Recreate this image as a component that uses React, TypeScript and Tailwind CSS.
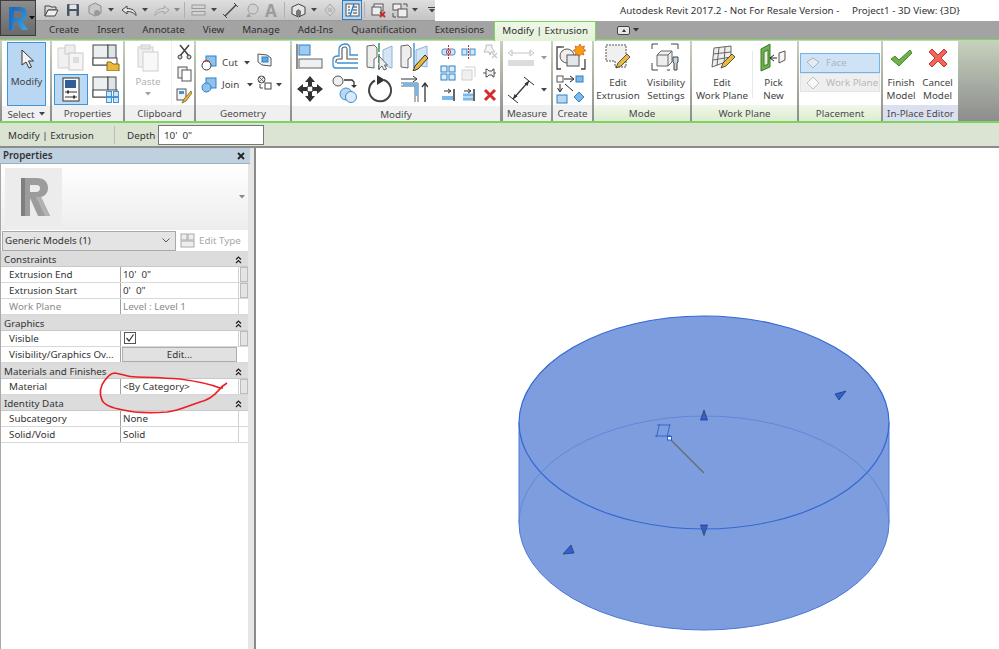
import type { ReactNode } from "react";

const Ico = ({ w, h, children }: { w: number; h: number; children: ReactNode }) => (
  <svg width={w} height={h} viewBox={`0 0 ${w} ${h}`} className="block shrink-0" fill="none">
    {children}
  </svg>
);

const Caret = ({ color = "#444" }: { color?: string }) => (
  <svg width={6} height={4} viewBox="0 0 6 4" className="block shrink-0">
    <path d="M0 0h6L3 3.5z" fill={color} />
  </svg>
);

const Panel = ({
  className,
  label,
  tone = "gray",
  children,
}: {
  className: string;
  label: ReactNode;
  tone?: "gray" | "green" | "blue";
  children: ReactNode;
}) => (
  <div className={`flex flex-col shrink-0 ${className}`}>
    <div className="h-[65px] bg-white flex">{children}</div>
    <div
      className={`h-[16px] pt-[2px] flex items-center justify-center text-[#4a4a4a] whitespace-nowrap ${
        tone === "gray"
          ? "bg-[#f0f0f0]"
          : tone === "green"
            ? "bg-gradient-to-b from-[#f1f7ea] to-[#dcedcf]"
            : "bg-[#dbe0f0]"
      }`}
    >
      {label}
    </div>
  </div>
);

/* quick access toolbar */
const Qat = () => (
  <div className="flex items-center h-[21px] w-[399px] pl-[8px] bg-gradient-to-b from-[#dedede] to-[#c4c4c4] border-b border-[#9a9a9a]">
    <Ico w={15} h={14}>
      <path d="M1 3h5l1 1h5v3H4l-3 6z" fill="#d9d9d9" stroke="#444" />
      <path d="M1 13l3-6h10l-3 6z" fill="#f0f0f0" stroke="#444" />
    </Ico>
    <div className="w-[7px]" />
    <Ico w={14} h={14}>
      <rect x="1" y="1" width="12" height="12" rx="1" fill="#4b5563" />
      <rect x="3.5" y="1.5" width="7" height="4.5" fill="#e5e7eb" />
      <rect x="3.5" y="8" width="7" height="5" fill="#c9ccd2" />
    </Ico>
    <div className="w-[7px]" />
    <Ico w={16} h={16}>
      <path d="M8 1l6 3v7l-6 3-6-3V4z" fill="#c9c9c9" stroke="#8f8f8f" />
      <circle cx="10" cy="11" r="3" fill="#9a9a9a" />
    </Ico>
    <div className="w-[5px]" />
    <Caret />
    <div className="w-[7px]" />
    <Ico w={17} h={13}>
      <path d="M6 2L1 6l5 4V7.5c4 0 7 1 9 4 0-5-4-7-9-7z" fill="#e5e5e5" stroke="#444" />
    </Ico>
    <div className="w-[4px]" />
    <Caret />
    <div className="w-[5px]" />
    <Ico w={17} h={13}>
      <path d="M11 2l5 4-5 4V7.5c-4 0-7 1-9 4 0-5 4-7 9-7z" fill="#d4d4d4" stroke="#a3a3a3" />
    </Ico>
    <div className="w-[5px]" />
    <Caret color="#888" />
    <div className="w-[5px] border-r border-[#b0b0b0] h-[16px]" />
    <div className="w-[6px]" />
    <Ico w={15} h={12}>
      <rect x="1" y="1" width="13" height="3.5" fill="#d4d4d4" stroke="#9a9a9a" />
      <rect x="1" y="7.5" width="13" height="3.5" fill="#d4d4d4" stroke="#9a9a9a" />
    </Ico>
    <div className="w-[5px]" />
    <Caret />
    <div className="w-[6px]" />
    <Ico w={15} h={15}>
      <path d="M2 13L13 2" stroke="#444" strokeWidth="1.5" />
      <path d="M0 11l4 4M11 0l4 4" stroke="#444" />
    </Ico>
    <div className="w-[6px]" />
    <Ico w={15} h={15}>
      <circle cx="9" cy="6" r="5" fill="#d0d0d0" stroke="#a0a0a0" />
      <path d="M5 10l-3 4h5z" fill="#a0a0a0" />
    </Ico>
    <div className="w-[6px]" />
    <span className="text-[17px] leading-none font-bold text-[#9c9c9c] w-[14px] shrink-0">A</span>
    <div className="w-[6px] border-r border-[#b0b0b0] h-[16px]" />
    <div className="w-[6px]" />
    <Ico w={15} h={15}>
      <path d="M7.5 1L14 4v7l-6.5 3L1 11V4z" fill="#e5e5e5" stroke="#444" />
      <path d="M5 13V8l2.5-2L10 8v5" fill="#777" />
    </Ico>
    <div className="w-[5px]" />
    <Caret />
    <div className="w-[6px]" />
    <Ico w={15} h={14}>
      <path d="M7 1l5 6-5 6-5-6z" fill="#d6d6d6" stroke="#a8a8a8" />
      <circle cx="7" cy="7" r="2.5" fill="#bcbcbc" />
    </Ico>
    <div className="w-[4px]" />
    <div className="w-[21px] h-[20px] bg-[#b9d5ee] border border-[#2f7fc4] flex items-center justify-center">
      <Ico w={15} h={14}>
        <rect x="1" y="1" width="13" height="12" fill="#f4f4f4" stroke="#555" />
        <path d="M3 4h2M3 7h2M3 10h2M8 4h4M8 7h4M8 10h4" stroke="#2a3f55" />
        <path d="M9 1L5 13" stroke="#1f7fd0" strokeWidth="1.4" />
      </Ico>
    </div>
    <div className="w-[3px] border-r border-[#b0b0b0] h-[16px]" />
    <div className="w-[6px]" />
    <Ico w={15} h={15}>
      <rect x="3" y="1" width="9" height="7" fill="#eee" stroke="#555" />
      <rect x="1" y="4" width="9" height="8" fill="#eee" stroke="#555" />
      <path d="M9 9l5 5M14 9l-5 5" stroke="#c62828" strokeWidth="1.8" />
    </Ico>
    <div className="w-[6px]" />
    <Ico w={16} h={15}>
      <rect x="1" y="1" width="8" height="6" fill="#eee" stroke="#555" />
      <rect x="6" y="6" width="9" height="8" fill="#eee" stroke="#555" />
      <path d="M11 1h4v3M1 10v4h3" stroke="#555" />
    </Ico>
    <div className="w-[4px]" />
    <Caret />
    <div className="w-[10px]" />
    <div className="flex flex-col gap-[1px] items-center">
      <div className="w-[7px] h-[1px] bg-[#444]" />
      <Caret />
    </div>
  </div>
);

const tabs = ["Create", "Insert", "Annotate", "View", "Manage", "Add-Ins", "Quantification", "Extensions"];

const Tabs = () => (
  <div className="flex h-[19px] items-center bg-[#a3a3a3] pl-[40px] border-b border-[#7ad45e] relative">
    {tabs.map((t) => (
      <div key={t} className="px-[9px] text-[#2f2f2f] leading-[18px] whitespace-nowrap">
        {t}
      </div>
    ))}
    <div className="ml-[1px] h-[20px] mt-[1px] px-[7px] bg-gradient-to-b from-[#eef7e7] to-[#e4f2d8] border border-b-0 border-[#7ad45e] text-[#2f2f2f] leading-[17px] relative z-10 whitespace-nowrap">
      Modify | Extrusion
    </div>
    <div className="ml-[21px] flex items-center gap-[3px]">
      <div className="w-[13px] h-[9px] rounded-[2px] bg-[#e8e8e8] border border-[#444] flex items-center justify-center">
        <div className="w-0 h-0 border-x-[2px] border-x-transparent border-b-[3px] border-b-[#333]" />
      </div>
      <Caret color="#333" />
    </div>
  </div>
);

const SelectPanel = () => (
  <Panel className="w-[48px]" label={<span className="flex items-center gap-[4px]">Select <Caret /></span>}>
    <div className="ml-[5px] mt-[1px] w-[39px] h-[64px] bg-[#b9d6f2] border border-[#3f94dc] flex flex-col items-center pt-[6px]">
      <Ico w={14} h={20}>
        <path d="M2 1v15l4-3 3 6 2.500-1-3-6h5z" fill="#f4f4f4" stroke="#333" />
      </Ico>
      <span className="mt-[8px] text-[#444]">Modify</span>
    </div>
  </Panel>
);

const PropertiesPanel = () => (
  <Panel className="w-[71px] ml-[2px]" label="Properties">
    <div className="grid grid-cols-2 grid-rows-2 pl-[1px] pt-[1px] w-full">
      <div className="flex items-center justify-center">
        <Ico w={28} h={27}>
          <path d="M1 4h14v20H1z" fill="#f0f0f0" stroke="#d0d0d0" />
          <path d="M8 1h10v9H8z" fill="#eee" stroke="#ccc" />
          <rect x="12" y="9" width="14" height="17" fill="#f4f4f4" stroke="#c8c8c8" />
          <rect x="16" y="13" width="6" height="6" fill="#ddd" />
        </Ico>
      </div>
      <div className="flex items-center justify-center">
        <Ico w={28} h={27}>
          <rect x="1" y="1" width="15" height="20" fill="#eceff2" stroke="#444" />
          <rect x="16" y="1" width="8" height="20" fill="#dfe4e8" stroke="#444" />
          <rect x="1" y="14" width="24" height="7" fill="#fff" stroke="#444" />
          <path d="M15 18h4l2 2h6v7H15z" fill="#e8b93b" stroke="#8a6a14" />
        </Ico>
      </div>
      <div className="flex items-center justify-center">
        <div className="w-[34px] h-[31px] bg-[#bcd9f3] border border-[#3f94dc] flex items-center justify-center">
          <Ico w={18} h={25}>
            <rect x="1" y="1" width="16" height="23" fill="#fafafa" stroke="#333" />
            <rect x="3" y="3" width="11" height="8" fill="#2f5f96" />
            <path d="M3 15h12M3 20h12" stroke="#333" />
            <rect x="5" y="13.500" width="2" height="3" fill="#333" />
            <rect x="11" y="18.500" width="2" height="3" fill="#333" />
          </Ico>
        </div>
      </div>
      <div className="flex items-center justify-center">
        <Ico w={28} h={27}>
          <rect x="1" y="1" width="15" height="20" fill="#eceff2" stroke="#444" />
          <rect x="16" y="1" width="8" height="20" fill="#dfe4e8" stroke="#444" />
          <rect x="1" y="14" width="24" height="7" fill="#fff" stroke="#444" />
          <g fill="#cfe5f8" stroke="#3f94dc">
            <rect x="14.500" y="15.500" width="5" height="5" />
            <rect x="21.500" y="15.500" width="5" height="5" />
            <rect x="14.500" y="21.500" width="5" height="5" />
            <rect x="21.500" y="21.500" width="5" height="5" />
          </g>
        </Ico>
      </div>
    </div>
  </Panel>
);

const ClipboardPanel = () => (
  <Panel className="w-[69px] ml-[2px]" label="Clipboard">
    <div className="w-[47px] flex flex-col items-center pt-[3px] border-r border-[#f0f0f0]">
      <Ico w={22} h={28}>
        <rect x="1" y="3" width="15" height="20" fill="#f0f0f0" stroke="#d0d0d0" />
        <rect x="6" y="8" width="15" height="19" fill="#f8f8f8" stroke="#d0d0d0" />
        <rect x="4" y="1" width="9" height="4" fill="#e4e4e4" stroke="#d0d0d0" />
      </Ico>
      <span className="text-[#b0b0b0] mt-[2px] leading-[16px]">Paste</span>
      <div className="mt-[2px]"><Caret color="#a0a0a0" /></div>
    </div>
    <div className="flex flex-col items-center justify-between pl-[4px] pt-[3px] pb-[1px] h-full">
      <Ico w={15} h={16}>
        <path d="M3 1l9 11M12 1L3 12" stroke="#444" strokeWidth="1.500" />
        <circle cx="3" cy="13" r="2" fill="#cbd5e1" stroke="#444" />
        <circle cx="12" cy="13" r="2" fill="#cbd5e1" stroke="#444" />
      </Ico>
      <Ico w={15} h={16}>
        <rect x="1" y="1" width="9" height="11" fill="#f3f3f3" stroke="#555" />
        <rect x="5" y="4" width="9" height="11" fill="#fff" stroke="#555" />
      </Ico>
      <Ico w={16} h={16}>
        <rect x="1" y="1" width="9" height="11" fill="#f3f3f3" stroke="#555" />
        <rect x="3" y="3" width="5" height="3" fill="#3f94dc" />
        <path d="M15 3L8 11l-2 4 4-2 6-8z" fill="#e8b93b" stroke="#6b5312" strokeWidth=".7" />
      </Ico>
    </div>
  </Panel>
);

const GeometryPanel = () => (
  <Panel className="w-[94px] ml-[2px]" label="Geometry">
    <div className="flex flex-col w-full pl-[5px] pt-[14px] gap-[6px]">
      <div className="flex items-center h-[16px]">
        <Ico w={16} h={16}>
          <rect x="5" y="1" width="10" height="10" fill="#8ec2ec" stroke="#2f80c4" />
          <circle cx="5.500" cy="10.500" r="4.500" fill="#fff" stroke="#333" />
          <path d="M2 7a5 5 0 0 1 7 0" stroke="#d92c2c" />
        </Ico>
        <span className="ml-[5px] w-[22px] text-[#3f3f3f]">Cut</span>
        <Caret />
        <div className="ml-[7px] -mt-[7px]">
          <Ico w={15} h={16}>
            <path d="M1 2l9 1 4 3v8l-9-1-4-3z" fill="#f2f6fa" stroke="#555" />
            <rect x="5" y="5" width="6" height="5" fill="#5ea8e2" stroke="#2f80c4" />
          </Ico>
        </div>
      </div>
      <div className="flex items-center h-[16px]">
        <Ico w={16} h={16}>
          <rect x="5" y="1" width="10" height="10" fill="#8ec2ec" stroke="#2f80c4" />
          <circle cx="5.500" cy="10.500" r="4.500" fill="#8ec2ec" stroke="#2f80c4" />
        </Ico>
        <span className="ml-[5px] w-[25px] text-[#3f3f3f]">Join</span>
        <Caret />
        <div className="ml-[4px] -mt-[4px]">
          <Ico w={15} h={16}>
            <circle cx="4.500" cy="4.500" r="3.500" fill="#eee" stroke="#444" />
            <path d="M2 2l5 5M7 2L2 7" stroke="#444" strokeWidth=".7" />
            <rect x="8" y="8" width="6" height="6" fill="#fff" stroke="#444" />
            <path d="M3 9v4h3" stroke="#444" />
          </Ico>
        </div>
        <div className="ml-[4px]"><Caret /></div>
      </div>
    </div>
  </Panel>
);

const BigTools = () => (
  <div className="grid grid-cols-[35px_35px_34px_35px] grid-rows-[32px_31px] pl-[4px] pt-[2px]">
    <Ico w={28} h={28}>
      <path d="M1 1v25" stroke="#666" strokeWidth="1.500" />
      <rect x="3" y="2" width="11" height="10" fill="#9fcbef" stroke="#2f80c4" />
      <rect x="3" y="16" width="23" height="9" fill="#eef0f2" stroke="#666" />
    </Ico>
    <Ico w={28} h={28}>
      <path d="M2 22v-5c0-3 2-4 5-4h1V6c0-3 3-5 6-5s5 2 5 5v6h8" stroke="#3f8fcf" strokeWidth="1.300" fill="#fff" />
      <path d="M5 20v-2c0-2 1-2 3-2h3V6c0-1.500 1-2 3-2s2 .5 2 2v10h11" stroke="#555" strokeWidth="1.100" />
      <path d="M2 22c0 2 1 3 3 3h22M6 20h21" stroke="#3f8fcf" strokeWidth="1.300" />
    </Ico>
    <Ico w={28} h={28}>
      <path d="M1 3l7-1 3 3v9l-3 2v9l-7-1z" fill="#eee" stroke="#666" />
      <path d="M13 0v27" stroke="#2e9f47" strokeWidth="1.500" strokeDasharray="9 2" />
      <path d="M26 3l-9 4v15l9 3z" fill="#d4e6f6" stroke="#8db4d2" />
      <path d="M13 13v13l3-3 2 4 2.500-1-2-4h3z" fill="#eee" stroke="#555" strokeWidth=".9" />
    </Ico>
    <Ico w={28} h={28}>
      <path d="M1 3l7-1 3 3v9l-3 2v9l-7-1z" fill="#eee" stroke="#666" />
      <path d="M14 0v25" stroke="#3f8fcf" strokeWidth="1.400" />
      <path d="M27 3l-11 4v15l11 2z" fill="#d4e6f6" stroke="#8db4d2" />
      <path d="M25 12L15 23l-2 5 5-2 10-11z" fill="#e8b93b" stroke="#333" />
    </Ico>
    <Ico w={28} h={28}>
      <path d="M14 1l5 6h-3v5h-4V7H9zM14 27l5-6h-3v-5h-4v5H9zM1 14l6-5v3h5v4H7v3zM27 14l-6-5v3h-5v4h5v3z" fill="#333" />
      <rect x="11.500" y="11.500" width="5" height="5" fill="#fff" stroke="#666" />
    </Ico>
    <Ico w={28} h={28}>
      <circle cx="7" cy="6" r="5" fill="#eee" stroke="#555" />
      <path d="M13 5h8l2 2v4" stroke="#333" strokeWidth="1.300" />
      <path d="M20 10h6l-3 3z" fill="#333" />
      <circle cx="15" cy="19" r="6" fill="#b9d7f1" stroke="#3f8fcf" />
      <circle cx="20" cy="22" r="5.500" fill="#d9eafa" stroke="#3f8fcf" />
    </Ico>
    <Ico w={28} h={28}>
      <path d="M18 5a11 11 0 1 1-9 .5" stroke="#444" strokeWidth="2" />
      <path d="M11 0l8 5-8 5z" fill="#333" />
    </Ico>
    <Ico w={28} h={28}>
      <path d="M1 4h15M13 1l4 3-4 3" stroke="#333" />
      <path d="M1 8h17v19" stroke="#666" />
      <path d="M1 11h14v16" stroke="#666" />
      <path d="M3 9.500h13.500V21" stroke="#76b6ea" strokeWidth="3" />
      <path d="M25 27V9M22 12l3-4 3 4" stroke="#333" strokeWidth="1.300" />
    </Ico>
  </div>
);

const SmallTools = () => (
  <div className="grid grid-cols-3 grid-rows-3 w-[66px] pl-[3px]">
    <div className="flex items-center justify-center">
      <Ico w={15} h={14}>
        <rect x="1" y="4" width="13" height="6" rx="2" fill="#cfe5f8" stroke="#3f8fcf" />
        <path d="M7.500 0v14" stroke="#d92c2c" strokeDasharray="2 1" />
        <circle cx="7.500" cy="7" r="2.200" stroke="#d92c2c" />
      </Ico>
    </div>
    <div className="flex items-center justify-center">
      <Ico w={15} h={14}>
        <rect x="1" y="4" width="5" height="6" fill="#cfe5f8" stroke="#3f8fcf" />
        <rect x="9" y="4" width="5" height="6" fill="#cfe5f8" stroke="#3f8fcf" />
        <path d="M7.500 0v14" stroke="#d92c2c" strokeDasharray="2 1" />
      </Ico>
    </div>
    <div className="flex items-center justify-center">
      <Ico w={16} h={15}>
        <path d="M4 1h6v3l3 4H9l-1 3-1-3H2l2-4z" fill="#f4f4f4" stroke="#bcbcbc" />
        <path d="M10 9l5 5M15 9l-5 5" stroke="#c8c8c8" strokeWidth="1.300" />
      </Ico>
    </div>
    <div className="flex items-center justify-center">
      <Ico w={16} h={16}>
        <g fill="#dcecf9" stroke="#2f80c4">
          <rect x="1" y="1" width="6" height="6" />
          <rect x="9" y="1" width="6" height="6" />
          <rect x="1" y="9" width="6" height="6" />
          <rect x="9" y="9" width="6" height="6" />
        </g>
      </Ico>
    </div>
    <div className="flex items-center justify-center">
      <Ico w={15} h={15}>
        <rect x="1" y="4" width="10" height="10" fill="#f0f0f0" stroke="#d0d0d0" />
        <path d="M4 1h10v10" stroke="#d0d0d0" />
      </Ico>
    </div>
    <div className="flex items-center justify-center">
      <Ico w={15} h={13}>
        <path d="M4 2h1l2 2h3l1-2h1v8h-1l-1-2H7l-2 2H4zM1 6h3M12 6h2" stroke="#555" fill="#f3f3f3" />
      </Ico>
    </div>
    <div className="flex items-center justify-center">
      <Ico w={15} h={14}>
        <path d="M13 1v12" stroke="#333" strokeWidth="1.500" />
        <rect x="1" y="8" width="11" height="4" fill="#7ab9ea" />
        <path d="M3 3h6M7 1l3 2-3 2" stroke="#333" />
      </Ico>
    </div>
    <div className="flex items-center justify-center">
      <Ico w={15} h={14}>
        <path d="M13 1v12" stroke="#333" strokeWidth="1.500" />
        <path d="M2 7h10M2 11h10" stroke="#7ab9ea" strokeWidth="3" />
        <path d="M3 3h6M7 1l3 2-3 2" stroke="#333" />
      </Ico>
    </div>
    <div className="flex items-center justify-center">
      <Ico w={14} h={14}>
        <path d="M2 2l10 10M12 2L2 12" stroke="#d62c2c" strokeWidth="3" />
      </Ico>
    </div>
  </div>
);

const ModifyPanel = () => (
  <Panel className="w-[208px] ml-[2px]" label="Modify">
    <BigTools />
    <SmallTools />
  </Panel>
);

const MeasurePanel = () => (
  <Panel className="w-[48px] ml-[3px]" label="Measure">
    <div className="flex flex-col pl-[4px] w-full">
      <div className="flex items-center h-[33px] gap-[6px]">
        <Ico w={28} h={20}>
          <path d="M4 5h20M1 5l4-3v6zM27 5l-4-3v6z" stroke="#c4c4c4" />
          <rect x="1" y="12" width="26" height="6" fill="#dcdcdc" />
        </Ico>
        <Caret color="#999" />
      </div>
      <div className="flex items-center h-[31px] gap-[6px]">
        <Ico w={28} h={28}>
          <path d="M6 23L22 5" stroke="#333" strokeWidth="1.200" />
          <path d="M1 19l10 8M17 1l10 8" stroke="#333" />
          <path d="M6 23l1.500-5 3 2.500zM22 5l-1.500 5-3-2.500z" fill="#333" />
        </Ico>
        <Caret />
      </div>
    </div>
  </Panel>
);

const CreatePanel = () => (
  <Panel className="w-[39px] ml-[2px]" label="Create">
    <div className="flex flex-col pl-[3px]">
      <div className="h-[33px] flex items-center">
        <Ico w={30} h={28}>
          <path d="M5 3H1v22h4M25 25h4v-10" stroke="#444" strokeWidth="1.300" />
          <path d="M5 3h3" stroke="#444" strokeWidth="1.300" />
          <circle cx="11" cy="12" r="7" fill="#eee" stroke="#555" />
          <rect x="11" y="11" width="12" height="11" fill="#e4e7ea" stroke="#555" />
          <path d="M24 0l1.500 3 3-1-1 3 2.500 1.500-3 1.500 1 3-3-1-1.500 2.500-1.500-2.500-3 1 1-3-3-1.500 3-1.500-1-3 3 1z" fill="#f59e0b" stroke="#c2410c" strokeWidth=".6" />
        </Ico>
      </div>
      <div className="h-[31px] flex items-center">
        <Ico w={30} h={30}>
          <rect x="1" y="1" width="6" height="6" fill="#fff" stroke="#555" />
          <path d="M8 4h9M14 1l4 3-4 3" stroke="#222" />
          <rect x="20" y="1" width="7" height="6" fill="#7ab9ea" stroke="#2f80c4" />
          <path d="M4 9v7M1.500 13L4 17l2.500-4M9 9l8 7" stroke="#222" />
          <rect x="1" y="20" width="10" height="8" fill="#b9d7f1" stroke="#2f80c4" />
          <path d="M23 17l5 5-5 5-5-5z" fill="#7ab9ea" stroke="#2f80c4" />
        </Ico>
      </div>
    </div>
  </Panel>
);

const BigButton = ({ icon, lines, className }: { icon: ReactNode; lines: string[]; className: string }) => (
  <div className={`flex flex-col items-center pt-[1px] leading-[13px] text-[#444] ${className}`}>
    <div className="h-[31px] flex items-center justify-center">{icon}</div>
    <div className="mt-[3px] text-center whitespace-nowrap">
      {lines.map((l) => (
        <div key={l}>{l}</div>
      ))}
    </div>
  </div>
);

const Pencil = ({ x, y }: { x: number; y: number }) => (
  <path
    d={`M${x + 11} ${y}l3 3-9 9-5 2 2-5z`}
    fill="#e8b93b"
    stroke="#333"
    strokeWidth=".8"
  />
);

const ModePanel = () => (
  <Panel className="w-[96px] ml-[2px]" label="Mode" tone="green">
    <BigButton
      className="w-[48px]"
      lines={["Edit", "Extrusion"]}
      icon={
        <Ico w={28} h={28}>
          <path d="M2 1h20v22H11v-6H2z" fill="#f0f0f0" stroke="#555" strokeDasharray="2 1" />
          <Pencil x={12} y={10} />
        </Ico>
      }
    />
    <BigButton
      className="w-[48px]"
      lines={["Visibility", "Settings"]}
      icon={
        <Ico w={30} h={29}>
          <path d="M1 6V1h6M20 1h7v5M1 20v7h6M16 27h3" stroke="#444" />
          <path d="M6 12l4-4h11v11l-4 4H6z" fill="#eee" stroke="#666" />
          <path d="M6 12h11v11M17 12l4-4" stroke="#666" />
          <path d="M22 14h5v5l-1 1v7h-3v-7l-1-1z" fill="#c7d3dd" stroke="#444" />
        </Ico>
      }
    />
  </Panel>
);

const WorkPlanePanel = () => (
  <Panel className="w-[105px] ml-[2px]" label="Work Plane" tone="green">
    <BigButton
      className="w-[60px]"
      lines={["Edit", "Work Plane"]}
      icon={
        <Ico w={27} h={25}>
          <path d="M5 3l17-2v14L3 22z" fill="#eee" stroke="#666" />
          <path d="M10 2.500l-2 18M16 2l-1 17M4 9l18-2M4 15l18-3" stroke="#666" />
          <Pencil x={12} y={9} />
        </Ico>
      }
    />
    <div className="w-px h-[47px] mt-[10px] bg-[#e8e8e8]" />
    <BigButton
      className="w-[41px]"
      lines={["Pick", "New"]}
      icon={
        <Ico w={28} h={29}>
          <path d="M1 6l9-5v23l-9 4z" fill="#6fb04d" stroke="#3d7a2a" />
          <path d="M4 9l4-2v14l-4 2z" fill="#e6f0dd" stroke="#3d7a2a" />
          <path d="M10 15h7M14 12l-4 3 4 3" stroke="#222" />
          <path d="M19 10l6-2v9l-6 3z" fill="#f5f5f5" stroke="#555" />
        </Ico>
      }
    />
  </Panel>
);

const PlacementPanel = () => (
  <Panel className="w-[82px] ml-[2px]" label="Placement" tone="green">
    <div className="w-full pl-[1px] pr-[1px] pt-[12px] flex flex-col">
      <div className="h-[20px] bg-[#cfe3f6] border border-[#74b3e8] flex items-center pl-[5px] gap-[6px] text-[#a9b5bf]">
        <Ico w={14} h={14}>
          <path d="M1 6l6-4 6 4-6 6z" fill="#e4ecf2" stroke="#a8b4bd" />
        </Ico>
        Face
      </div>
      <div className="h-[19px] bg-[#efefef] border border-[#e2e2e2] flex items-center pl-[5px] gap-[6px] text-[#b8b8b8] whitespace-nowrap">
        <Ico w={14} h={14}>
          <path d="M7 1l6 6-6 6-6-6z" fill="#f8f8f8" stroke="#c0c0c0" />
        </Ico>
        Work Plane
      </div>
    </div>
  </Panel>
);

const EditorPanel = () => (
  <Panel className="w-[75px] ml-[2px]" label="In-Place Editor" tone="blue">
    <BigButton
      className="w-[36px]"
      lines={["Finish", "Model"]}
      icon={
        <Ico w={22} h={18}>
          <path d="M1 10l4-3 4 4L20 1l2 3L9 17z" fill="#6fb04d" stroke="#4b8a2f" />
        </Ico>
      }
    />
    <BigButton
      className="w-[37px]"
      lines={["Cancel", "Model"]}
      icon={
        <Ico w={22} h={22}>
          <path d="M2 5l3-3 6 6 6-6 3 3-6 6 6 6-3 3-6-6-6 6-3-3 6-6z" fill="#f0645a" stroke="#c9362c" />
        </Ico>
      }
    />
  </Panel>
);

const Ribbon = () => (
  <div className="flex h-[83px] border-b-2 border-[#7ad45e] pl-[2px] pt-[1px] bg-gradient-to-b from-[#c6d3bc] to-[#8d8d8d]">
    <SelectPanel />
    <PropertiesPanel />
    <ClipboardPanel />
    <GeometryPanel />
    <ModifyPanel />
    <MeasurePanel />
    <CreatePanel />
    <ModePanel />
    <WorkPlanePanel />
    <PlacementPanel />
    <EditorPanel />
  </div>
);

const OptionsBar = () => (
  <div className="flex items-center h-[25px] bg-[#dbe4d3] border-b-2 border-[#8c8c8c] text-[#333]">
    <span className="ml-[8px] w-[106px] mt-[2px]">Modify | Extrusion</span>
    <div className="w-px h-[18px] bg-[#b8c0b0]" />
    <span className="ml-[12px] w-[31px] mt-[2px]">Depth</span>
    <div className="w-[106px] h-[20px] bg-white border border-[#777] pl-[5px] leading-[19px] whitespace-pre">10'  0"</div>
  </div>
);

const Group = ({ title }: { title: string }) => (
  <div className="flex items-center justify-between h-[16px] bg-[#dcdcdc] pl-[3px] pr-[6px] pt-[2px] text-[#333] border-b border-[#c8c8c8]">
    {title}
    <svg width={7} height={8} viewBox="0 0 7 8" className="block">
      <path d="M1 3.500L3.500 1 6 3.500M1 7L3.500 4.500 6 7" stroke="#222" fill="none" strokeWidth="1.200" />
    </svg>
  </div>
);

const Row = ({
  name,
  value,
  muted,
  thumb = true,
}: {
  name: string;
  value: ReactNode;
  muted?: boolean;
  thumb?: boolean;
}) => (
  <div className={`flex h-[16px] border-b border-[#d8d8d8] bg-white ${muted ? "text-[#8a8a8a]" : "text-[#333]"}`}>
    <div className="w-[120px] pl-[8px] pt-[1px] border-r border-[#a0a0a0] whitespace-nowrap shrink-0 leading-[14px]">{name}</div>
    <div className="w-[117px] pl-[2px] pt-[1px] leading-[14px] shrink-0 whitespace-pre">{value}</div>
    <div className="flex-1 border-l border-[#d0d0d0] flex justify-center">
      {thumb && <div className="w-[8px] h-[15px] bg-[#e4e4e4] border border-[#bcbcbc]" />}
    </div>
  </div>
);

const Properties = () => (
  <aside className="w-[250px] shrink-0 bg-[#e6e6e6] relative">
    <div className="flex items-center justify-between h-[16px] bg-[#bfd0de] pl-[3px] pr-[5px] font-semibold text-[#333] border-b border-[#9fb0be]">
      Properties
      <svg width={8} height={8} viewBox="0 0 8 8" className="block">
        <path d="M1 1l6 6M7 1L1 7" stroke="#222" strokeWidth="1.800" />
      </svg>
    </div>
    <div className="w-[248px] h-[485px] bg-white border-l border-[#a8a8a8]">
      <div className="h-[66px] bg-gradient-to-b from-[#ffffff] to-[#ededed] flex items-center justify-between pl-[4px] pr-[3px]">
        <div className="w-[57px] h-[58px] bg-[#ececec] flex items-center justify-center">
          <Ico w={34} h={40}>
            <path d="M4 1h16c7 0 11 4 11 10 0 5-3 8-7 9l9 19H21l-8-18v18H4z" fill="#9c9c9c" />
            <path d="M13 8h6c3 0 4 1 4 3s-1 4-4 4h-6z" fill="#ececec" />
            <path d="M4 1h4v38H4z" fill="#7f7f7f" />
            <path d="M24 20l9 19h-5l-9-19z" fill="#b2b2b2" />
          </Ico>
        </div>
        <Caret color="#888" />
      </div>
      <div className="flex h-[21px] items-center">
        <div className="w-[174px] h-[20px] ml-px bg-[#e4e4e4] border border-[#a8a8a8] flex items-center justify-between pl-[2px] pr-[5px] text-[#333]">
          Generic Models (1)
          <svg width={8} height={5} viewBox="0 0 8 5" className="block">
            <path d="M.5.5L4 4 7.500.5" stroke="#555" fill="none" />
          </svg>
        </div>
        <div className="flex-1 flex items-center pl-[4px] gap-[4px] text-[#a8a8a8] whitespace-nowrap">
          <Ico w={15} h={15}>
            <rect x="1" y="1" width="6" height="6" fill="#eee" stroke="#aaa" />
            <rect x="8" y="1" width="6" height="6" fill="#eee" stroke="#aaa" />
            <rect x="1" y="8" width="13" height="6" fill="#eee" stroke="#aaa" />
          </Ico>
          Edit Type
        </div>
      </div>
      <Group title="Constraints" />
      <Row name="Extrusion End" value={`10'  0"`} />
      <Row name="Extrusion Start" value={`0'  0"`} />
      <Row name="Work Plane" value="Level : Level 1" muted thumb={false} />
      <Group title="Graphics" />
      <Row
        name="Visible"
        value={
          <div className="w-[12px] h-[12px] ml-[1px] border border-[#555] flex items-center justify-center">
            <svg width={10} height={10} viewBox="0 0 10 10" className="block">
              <path d="M1.500 5l2.500 3 4.500-6.500" stroke="#333" fill="none" strokeWidth="1.200" />
            </svg>
          </div>
        }
      />
      <div className="flex h-[16px] border-b border-[#d8d8d8] text-[#333]">
        <div className="w-[120px] pl-[8px] pt-[1px] border-r border-[#a0a0a0] shrink-0 leading-[14px] whitespace-nowrap">
          Visibility/Graphics Ov...
        </div>
        <div className="w-[115px] ml-px h-[15px] bg-[#e1e1e1] border border-[#adadad] text-center leading-[13px]">Edit...</div>
      </div>
      <Group title="Materials and Finishes" />
      <Row name="Material" value="<By Category>" />
      <Group title="Identity Data" />
      <Row name="Subcategory" value="None" thumb={false} />
      <Row name="Solid/Void" value="Solid" thumb={false} />
    </div>
    <svg className="absolute left-0 top-0 pointer-events-none" width={248} height={300} viewBox="0 148 248 300" fill="none">
      <path
        d="M227 383C222 386 220 388 218 391C213 397 208 400 200 402C188 406 178 411 167 412C150 413 135 413 123 410C112 408 104 405 102 400C99 394 100 386 105 380C108 376 112 373 115 373C122 374 128 377 136 377C150 377 165 378 180 379C195 381 210 384 220 388L223 388"
        stroke="#ee1c25"
        strokeWidth="1.700"
      />
    </svg>
  </aside>
);

const Tri = ({ d }: { d: string }) => <path d={d} fill="#2f62d0" stroke="#24375f" strokeWidth=".7" />;

const Canvas = () => (
  <main className="flex-1 ml-[4px] bg-white border-l-2 border-[#8a8a8a] relative overflow-hidden">
    <svg className="absolute -left-[2px] top-0" width={745} height={501} viewBox="254 148 745 501" fill="none">
      <path d="M519 422.500V523A185 107 0 0 0 889 523V422.500z" fill="#7e9ddf" stroke="#4a78d8" />
      <ellipse cx="704" cy="422.500" rx="185" ry="106.500" fill="#7e9ddf" stroke="#3368d4" strokeWidth="1.200" />
      <path d="M519 523A185 107 0 0 1 889 523" stroke="#5a82d8" strokeWidth=".8" />
      <Tri d="M704 410l3.500 10h-7z" />
      <Tri d="M700.500 525h7l-3.500 10.500z" />
      <Tri d="M846 391l-11 3 4 6z" />
      <Tri d="M563 554l11-1-3-8z" />
      <path d="M671 440l33 33" stroke="#666" strokeWidth="1.100" />
      <path d="M657 425h13M655 436h12M659.500 424l-3 13M670 424l-3 13" stroke="#2a62c8" strokeWidth=".9" />
      <rect x="667.500" y="436.500" width="4" height="3.500" fill="#fff" stroke="#1f64d6" />
      <path d="M668.500 436.500v-1h2v1" stroke="#1f64d6" strokeWidth=".7" />
    </svg>
  </main>
);

export default function App() {
  return (
    <div className="w-[999px] h-[649px] overflow-hidden bg-[#e6e6e6] flex flex-col text-[9.8px] font-['Noto_Sans',sans-serif] leading-none relative">
      <div className="flex h-[21px] bg-white">
        <div className="w-[36px] shrink-0" />
        <Qat />
        <div className="flex-1 pl-[185px] text-[#333] leading-[21px] whitespace-pre">
          Autodesk Revit 2017.2 - Not For Resale Version -     Project1 - 3D View: {"{3D}"}
        </div>
      </div>
      <Tabs />
      <Ribbon />
      <OptionsBar />
      <div className="flex-1 flex min-h-0">
        <Properties />
        <Canvas />
      </div>
      <div className="absolute left-0 top-0 w-[36px] h-[36px] bg-gradient-to-b from-[#8c8c8c] to-[#6a6a6a] border border-[#3d3d3d] flex items-center pl-[6px] gap-[1px]">
        <Ico w={21} h={24}>
          <defs>
            <linearGradient id="rleg" x1="0" y1="0" x2="1" y2="1">
              <stop offset="0" stopColor="#1d5fb0" />
              <stop offset="1" stopColor="#38a8e8" />
            </linearGradient>
          </defs>
          <path d="M2 1h10c5 0 8 2 8 7 0 4-2 6-5 7l6 9h-6l-5-8H7v8H2z" fill="url(#rleg)" />
          <path d="M7 5h4c3 0 4 1 4 3s-1 4-4 4H7z" fill="#757575" />
          <path d="M2 1h3v23H2z" fill="#1f6fc4" />
        </Ico>
        <Caret color="#111" />
      </div>
    </div>
  );
}
